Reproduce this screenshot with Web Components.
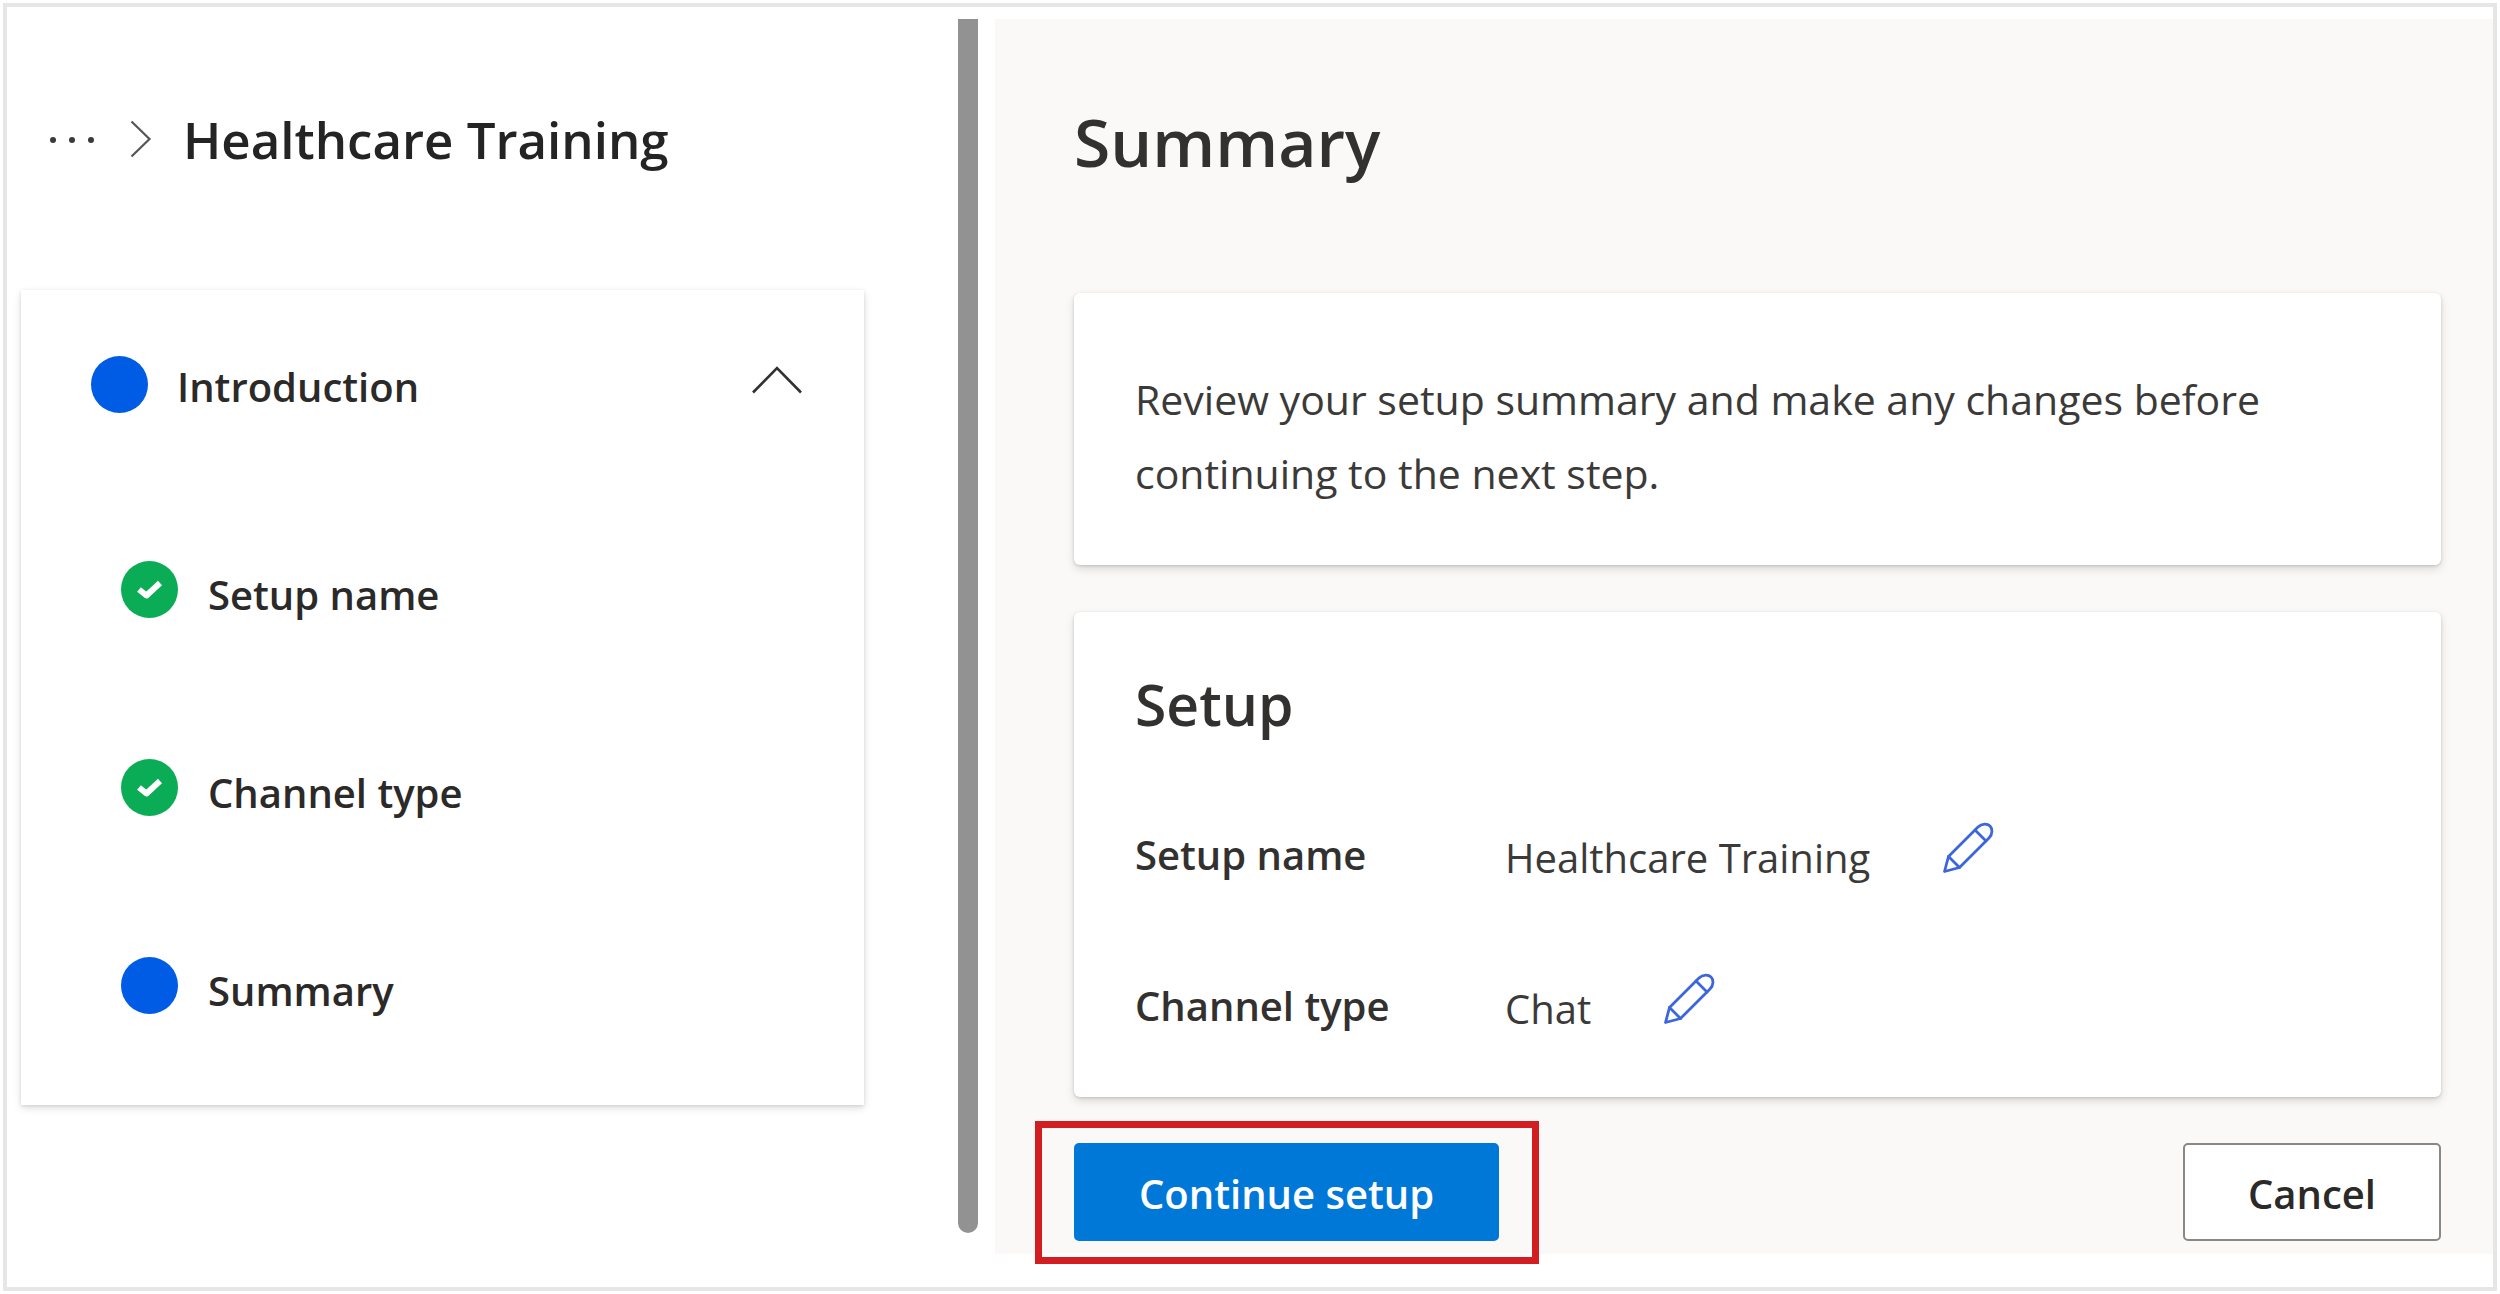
<!DOCTYPE html>
<html lang="en">
<head>
<meta charset="utf-8">
<title>Healthcare Training setup</title>
<style>
  html, body { margin: 0; }
  body {
    font-family: "Open Sans", "Noto Sans", sans-serif;
    font-size: 40px;
    color: #323130;
    background: #fff;
  }
</style>
</head>
<body>
<setup-shell>
  <setup-sidebar slot="sidebar">
    <crumb-header slot="header">Healthcare Training</crumb-header>
    <step-group label="Introduction">
      <step-item state="done">Setup name</step-item>
      <step-item state="done">Channel type</step-item>
      <step-item state="current">Summary</step-item>
    </step-group>
  </setup-sidebar>
  <summary-page heading="Summary">
    <summary-card class="note">Review your setup summary and make any changes before continuing to the next step.</summary-card>
    <summary-card heading="Setup">
      <summary-row label="Setup name">Healthcare Training</summary-row>
      <summary-row label="Channel type">Chat</summary-row>
    </summary-card>
    <callout-box slot="actions"><action-button primary>Continue setup</action-button></callout-box>
    <action-button slot="actions">Cancel</action-button>
  </summary-page>
</setup-shell>

<script>
const define = (name, markup, init) => {
  const template = document.createElement('template');
  template.innerHTML = '<style>*, *::before, *::after { box-sizing: border-box; } :host { display: block; box-sizing: border-box; }</style>' + markup;
  customElements.define(name, class extends HTMLElement {
    constructor() {
      super();
      this.attachShadow({ mode: 'open' }).append(template.content.cloneNode(true));
    }
    connectedCallback() {
      if (init) init(this, this.shadowRoot);
    }
  });
};

define('setup-shell', `
<style>
  :host { display: flex; min-height: 100vh; padding: 3px; }
  .frame {
    flex: 1; min-width: 0;
    display: grid; grid-template-columns: 971fr 1498fr; column-gap: 17px;
    border: 4px solid #e6e6e6; padding: 12px 0 33px;
  }
</style>
<div class="frame"><slot name="sidebar"></slot><slot></slot></div>`);

define('setup-sidebar', `
<style>
  :host { display: flex; align-items: stretch; }
  .content { flex: 1; min-width: 0; padding: 0 94px 0 14px; }
  .scrollbar { width: 20px; margin-bottom: 21px; background: #929292; border-radius: 0 0 10px 10px; }
</style>
<div class="content"><slot name="header"></slot><slot></slot></div>
<div class="scrollbar"></div>`);

define('crumb-header', `
<style>
  :host { height: 240px; padding-left: 28px; margin-bottom: 31px; }
  nav { height: 100%; display: flex; align-items: center; }
  button { display: flex; padding: 0; border: 0; background: none; }
  .chevron { margin: 0 31px 0 35px; }
  h2 { margin: 0; font-size: 51px; font-weight: 600; line-height: 68px; color: #242424; }
  svg { display: block; }
</style>
<nav aria-label="Breadcrumb">
  <button type="button" aria-label="More"><svg width="46" height="8" viewBox="0 0 46 8" fill="#3a3a3a"><circle cx="4" cy="5" r="3"/><circle cx="23" cy="5" r="3"/><circle cx="42" cy="5" r="3"/></svg></button>
  <svg class="chevron" width="22" height="38" viewBox="0 0 22 38" fill="none" stroke="#555" stroke-width="2.200"><path d="M1.500 1.500 19.500 19 1.500 36.500"/></svg>
  <h2><slot></slot></h2>
</nav>`);

define('step-group', `
<style>
  :host { padding-bottom: 21px; background: #fff; box-shadow: 0 3px 8px rgba(0,0,0,.13), 0 1px 3px rgba(0,0,0,.1); }
  button {
    width: 100%; height: 188px; margin-bottom: 12px; padding: 0 62px 0 70px;
    display: flex; align-items: center; gap: 29px;
    border: 0; background: none; font: inherit; font-weight: 600; color: #2b2a29; text-align: left;
  }
  .dot { width: 57px; height: 57px; border-radius: 50%; background: #005be5; }
  .label { flex: 1; padding-top: 4px; }
  svg { display: block; margin-bottom: 8px; }
</style>
<button type="button" aria-expanded="true">
  <span class="dot"></span><span class="label"></span>
  <svg width="50" height="28" viewBox="0 0 50 28" fill="none" stroke="#323130" stroke-width="2.600"><path d="M1 26.500 25 2 49 26.500"/></svg>
</button>
<div role="list"><slot></slot></div>`, (host, root) => {
  root.querySelector('.label').textContent = host.getAttribute('label');
});

define('step-item', `
<style>
  :host { display: flex; align-items: center; gap: 30px; height: 198px; padding-left: 100px; font-weight: 600; color: #2b2a29; }
  .dot { width: 57px; height: 57px; border-radius: 50%; background: #005be5; }
  :host([state="done"]) .dot { background: #0aac56; }
  :host([state="current"]) svg { display: none; }
  .label { padding-top: 10px; }
  svg { display: block; }
</style>
<span class="dot"><svg width="57" height="57" viewBox="0 0 57 57" fill="none" stroke="#fff" stroke-width="6" stroke-linejoin="round"><path d="M18 28.500 25.500 34.500 39 22"/></svg></span>
<span class="label"><slot></slot></span>`, host => host.setAttribute('role', 'listitem'));

define('summary-page', `
<style>
  :host { padding: 0 52px 13px 79px; background: #faf9f8; }
  h1 { margin: 0; height: 244px; line-height: 244px; font-size: 66px; font-weight: 600; }
  .cards { display: flex; flex-direction: column; gap: 47px; margin: 30px 0 46px; }
  .actions { display: flex; justify-content: space-between; align-items: center; }
</style>
<h1></h1>
<div class="cards"><slot></slot></div>
<div class="actions"><slot name="actions"></slot></div>`, (host, root) => {
  root.querySelector('h1').textContent = host.getAttribute('heading');
});

define('summary-card', `
<style>
  :host { padding: 54px 61px 16px; background: #fff; border-radius: 6px; box-shadow: 0 4px 10px rgba(0,0,0,.13), 0 1px 3px rgba(0,0,0,.15); }
  :host(.note) { padding: 69px 61px 55px; font-size: 41px; line-height: 74px; color: #3b3a39; }
  :host(.note) h2 { display: none; }
  h2 { margin: 0 0 37px; font-size: 57px; line-height: 76px; font-weight: 600; }
</style>
<h2></h2>
<slot></slot>`, (host, root) => {
  root.querySelector('h2').textContent = host.getAttribute('heading') || '';
});

define('summary-row', `
<style>
  :host { display: flex; align-items: center; height: 151px; }
  .label { flex: 0 0 370px; font-weight: 600; }
  .value { padding-top: 6px; color: #3b3a39; }
  button { display: flex; margin: 0 0 13px 72px; padding: 0; border: 0; background: none; }
</style>
<span class="label" id="label"></span>
<span class="value"><slot></slot></span>
<button type="button"><svg width="52" height="52" viewBox="0 0 52 52" fill="none" stroke="#3c66dc" stroke-width="2.800" stroke-linejoin="round" stroke-linecap="round">
  <path d="M2.500 49.500 6.500 34.500 36 5C40 1 45.500 1.500 48 4 50.500 6.500 51 12 47 16L17.500 45.500Z"/>
  <path d="M33 8 44 19M6.500 34.500 17.500 45.500"/>
</svg></button>`, (host, root) => {
  const label = host.getAttribute('label');
  root.querySelector('.label').textContent = label;
  root.querySelector('button').setAttribute('aria-label', 'Edit ' + label);
});

define('callout-box', `
<style>
  :host { position: relative; }
  .ring { position: absolute; inset: -22px -40px -23px -39px; border: 7px solid #d21e20; pointer-events: none; }
</style>
<slot></slot><div class="ring"></div>`);

define('action-button', `
<style>
  button {
    display: block; height: 98px; padding: 2px 63px 0; border: 2px solid #8a8886; border-radius: 5px;
    background: #fff; color: #2b2a29; font: inherit; font-weight: 600; white-space: nowrap;
  }
  :host([primary]) button { border-color: #0078d7; background: #0078d7; color: #fff; }
</style>
<button type="button"><slot></slot></button>`);
</script>
</body>
</html>
